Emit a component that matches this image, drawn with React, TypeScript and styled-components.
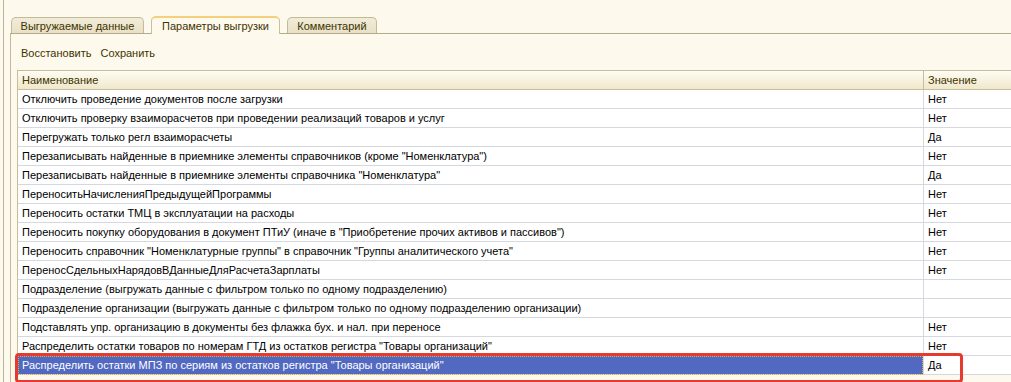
import styled, { createGlobalStyle } from 'styled-components';

const GlobalStyle = createGlobalStyle`
  html, body {
    margin: 0;
    padding: 0;
    background: #fdf9ed;
    overflow: hidden;
  }
  body {
    font-family: 'Liberation Sans', Arial, sans-serif;
    font-size: 11px;
  }
`;

const ROWS: { name: string; value: string }[] = [
  { name: 'Отключить проведение документов после загрузки', value: 'Нет' },
  { name: 'Отключить проверку взаиморасчетов при проведении реализаций товаров и услуг', value: 'Нет' },
  { name: 'Перегружать только регл взаиморасчеты', value: 'Да' },
  { name: 'Перезаписывать найденные в приемнике элементы справочников (кроме "Номенклатура")', value: 'Нет' },
  { name: 'Перезаписывать найденные в приемнике элементы справочника "Номенклатура"', value: 'Да' },
  { name: 'ПереноситьНачисленияПредыдущейПрограммы', value: 'Нет' },
  { name: 'Переносить остатки ТМЦ в эксплуатации на расходы', value: 'Нет' },
  { name: 'Переносить покупку оборудования в документ ПТиУ (иначе в "Приобретение прочих активов и пассивов")', value: 'Нет' },
  { name: 'Переносить справочник "Номенклатурные группы" в справочник "Группы аналитического учета"', value: 'Нет' },
  { name: 'ПереносСдельныхНарядовВДанныеДляРасчетаЗарплаты', value: 'Нет' },
  { name: 'Подразделение  (выгружать данные с фильтром только по одному подразделению)', value: '' },
  { name: 'Подразделение организации (выгружать данные с фильтром только по одному подразделению организации)', value: '' },
  { name: 'Подставлять упр. организацию в документы без флажка бух. и нал. при переносе', value: 'Нет' },
  { name: 'Распределить остатки товаров по номерам ГТД из остатков регистра "Товары организаций"', value: 'Нет' },
  { name: 'Распределить остатки МПЗ по сериям из остатков регистра "Товары организаций"', value: 'Да' },
];

const TABS = [
  { title: 'Выгружаемые данные', width: 133 },
  { title: 'Параметры выгрузки', width: 129, active: true },
  { title: 'Комментарий', width: 90 },
];

const SELECTED = ROWS.length - 1;

const Window = styled.div`
  height: 382px;
  margin-left: 3px;
  padding: 15px 0 0 6px;
  border-left: 1px solid #b9b39c;
  box-sizing: border-box;
`;

const TabStrip = styled.div`
  display: flex;
  align-items: flex-end;
  gap: 7px;
  height: 18px;
  padding-left: 1px;
  border-bottom: 1px solid #b4ab8a;
`;

const Tab = styled.div<{ $active?: boolean; $w: number }>`
  width: ${(p) => p.$w}px;
  height: ${(p) => (p.$active ? 18 : 16)}px;
  display: flex;
  align-items: center;
  justify-content: center;
  box-sizing: border-box;
  border: 1px solid ${(p) => (p.$active ? '#c9bf9a' : '#c4ba95')};
  border-bottom: none;
  border-top: ${(p) => (p.$active ? '2px solid #f4cf7c' : '1px solid #c4ba95')};
  border-radius: 5px 5px 0 0;
  background: ${(p) => (p.$active ? '#fdf9ed' : 'linear-gradient(#f1ecd9, #e8e1c6)')};
  color: #3f3300;
  margin-bottom: ${(p) => (p.$active ? -1 : 0)}px;
  padding-bottom: ${(p) => (p.$active ? 1 : 0)}px;
  white-space: nowrap;
`;

const Panel = styled.div`
  border-left: 1px solid #c4ba95;
  height: 100%;
  padding: 0 0 0 6px;
`;

const Toolbar = styled.div`
  display: flex;
  gap: 9px;
  height: 36px;
  align-items: center;
  padding: 1px 0 0 4px;
  box-sizing: border-box;
  color: #3f3300;
`;

const Grid = styled.div`
  position: relative;
  width: 1000px;
  display: grid;
  grid-template-columns: 905px 1fr;
  border: 1px solid #c5bd9b;
  border-bottom: none;
`;

const HeadCell = styled.div<{ $last?: boolean }>`
  height: 18px;
  line-height: 18px;
  padding-left: 4px;
  color: #3f3300;
  background: linear-gradient(#fefcf3, #f0e8cb);
  border-bottom: 1px solid #c5bd9b;
  border-left: ${(p) => (p.$last ? '1px solid #c5bd9b' : 'none')};
`;

const Cell = styled.div<{ $last?: boolean; $selected?: boolean }>`
  height: 18px;
  line-height: 18px;
  padding-left: 4px;
  white-space: nowrap;
  overflow: hidden;
  color: ${(p) => (p.$selected ? '#ffffff' : '#000000')};
  background: ${(p) => (p.$selected ? '#5169c1' : '#ffffff')};
  border-bottom: 1px solid #d5d8de;
  border-left: ${(p) => (p.$last ? '1px solid #d5d8de' : 'none')};
  ${(p) => (p.$selected ? 'outline: 1px dotted #e0b040; outline-offset: -1px;' : '')}
`;

const Highlight = styled.div`
  position: absolute;
  left: -3px;
  width: 942px;
  bottom: -8px;
  height: 24px;
  border: 3px solid #e63a2e;
  border-radius: 4px;
  pointer-events: none;
`;

const App = () => (
  <>
    <GlobalStyle />
    <Window>
      <TabStrip>
        {TABS.map((t) => (
          <Tab key={t.title} $w={t.width} $active={t.active}>
            {t.title}
          </Tab>
        ))}
      </TabStrip>
      <Panel>
        <Toolbar>
          <span>Восстановить</span>
          <span>Сохранить</span>
        </Toolbar>
        <Grid>
          <HeadCell>Наименование</HeadCell>
          <HeadCell $last>Значение</HeadCell>
          {ROWS.map((row, i) => [
            <Cell key={`n${i}`} $selected={i === SELECTED}>
              {row.name}
            </Cell>,
            <Cell key={`v${i}`} $last>
              {row.value}
            </Cell>,
          ])}
          <Highlight />
        </Grid>
      </Panel>
    </Window>
  </>
);

export default App;
